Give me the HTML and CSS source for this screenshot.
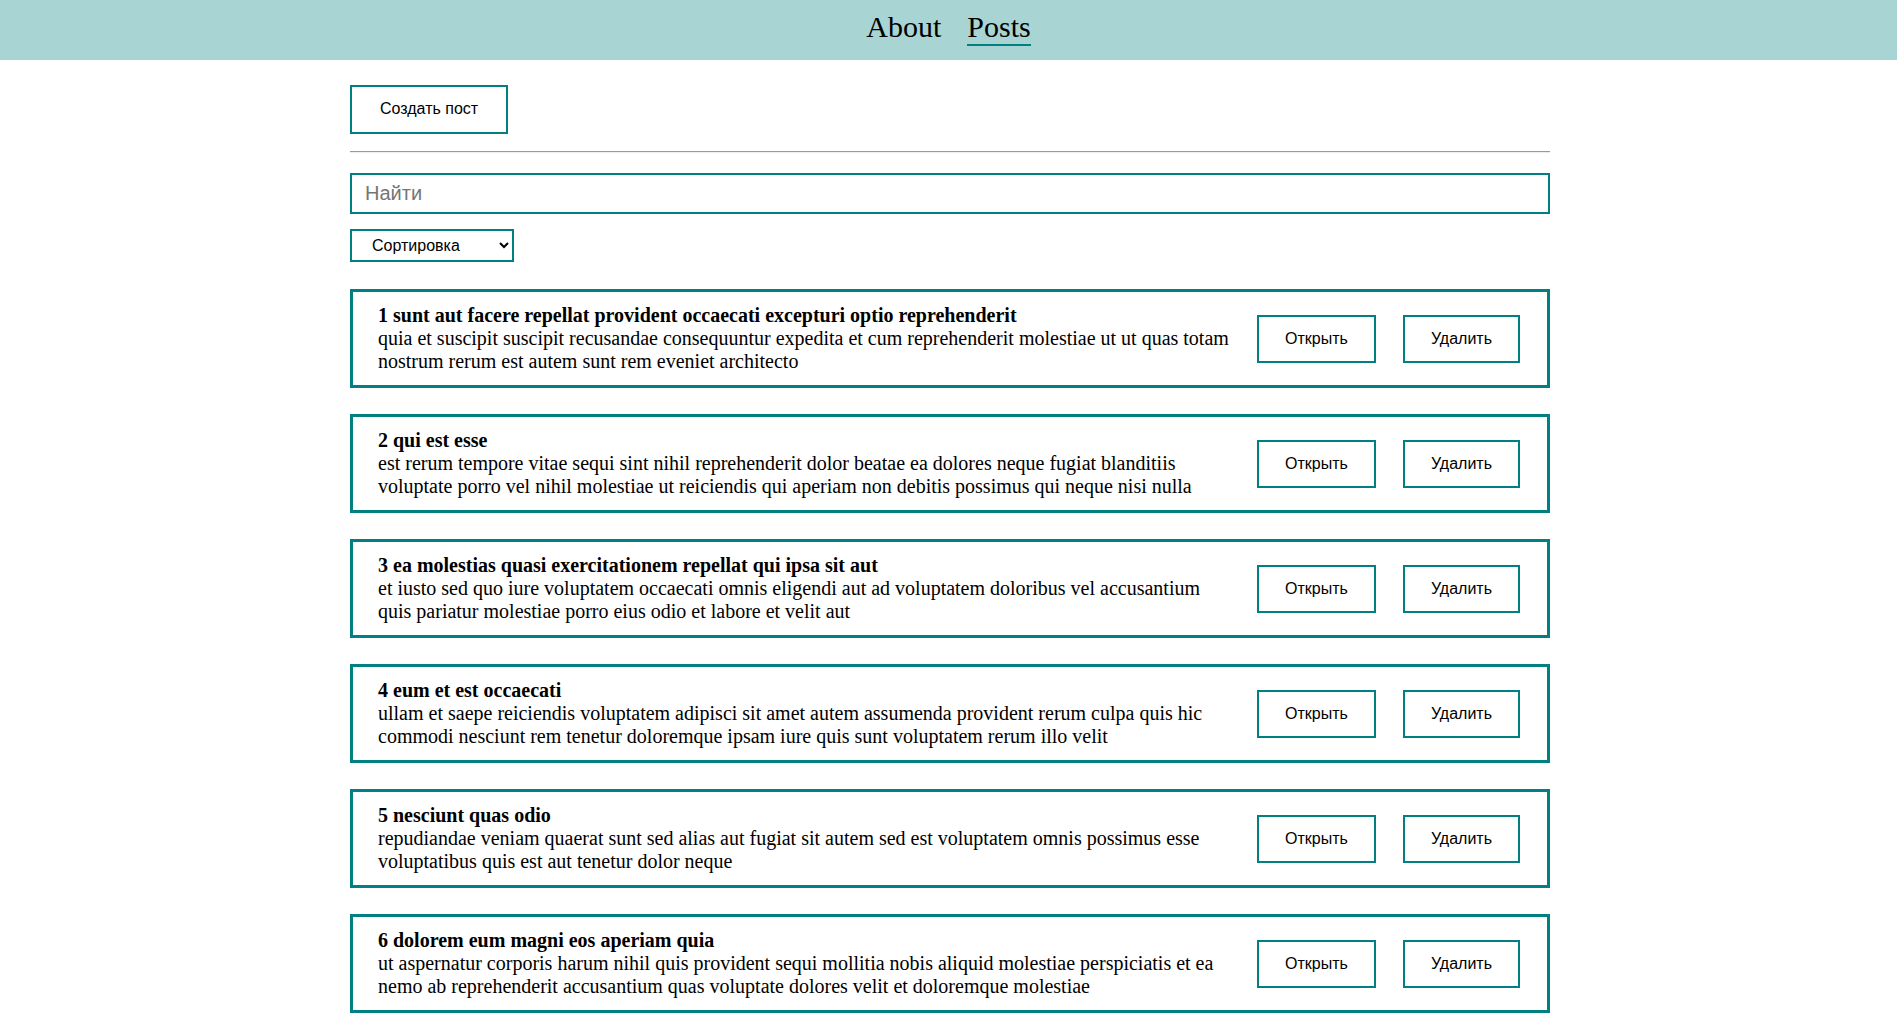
FILE: index.html
```html
<!DOCTYPE html>
<html lang="ru">
<head>
<meta charset="utf-8">
<title>Posts</title>
<link rel="stylesheet" href="styles.css">
</head>
<body>
<header class="navbar">
  <nav class="navbar__links">
    <a class="navbar__link" href="#">About</a>
    <a class="navbar__link navbar__link--active" href="#">Posts</a>
  </nav>
</header>
<main class="app">
  <button class="btn btn--create">Создать пост</button>
  <hr class="divider">
  <input class="search" type="text" placeholder="Найти">
  <div class="sort-row">
    <select class="sort">
      <option>Сортировка</option>
      <option>По названию</option>
      <option>По описанию</option>
    </select>
  </div>
  <div class="post-list">
    <div class="post">
      <div class="post__content">
        <strong class="post__title">1 sunt aut facere repellat provident occaecati excepturi optio reprehenderit</strong>
        <div class="post__body">quia et suscipit suscipit recusandae consequuntur expedita et cum reprehenderit molestiae ut ut quas totam nostrum rerum est autem sunt rem eveniet architecto</div>
      </div>
      <div class="post__btns">
        <button class="btn">Открыть</button>
        <button class="btn">Удалить</button>
      </div>
    </div>
    <div class="post">
      <div class="post__content">
        <strong class="post__title">2 qui est esse</strong>
        <div class="post__body">est rerum tempore vitae sequi sint nihil reprehenderit dolor beatae ea dolores neque fugiat blanditiis voluptate porro vel nihil molestiae ut reiciendis qui aperiam non debitis possimus qui neque nisi nulla</div>
      </div>
      <div class="post__btns">
        <button class="btn">Открыть</button>
        <button class="btn">Удалить</button>
      </div>
    </div>
    <div class="post">
      <div class="post__content">
        <strong class="post__title">3 ea molestias quasi exercitationem repellat qui ipsa sit aut</strong>
        <div class="post__body">et iusto sed quo iure voluptatem occaecati omnis eligendi aut ad voluptatem doloribus vel accusantium quis pariatur molestiae porro eius odio et labore et velit aut</div>
      </div>
      <div class="post__btns">
        <button class="btn">Открыть</button>
        <button class="btn">Удалить</button>
      </div>
    </div>
    <div class="post">
      <div class="post__content">
        <strong class="post__title">4 eum et est occaecati</strong>
        <div class="post__body">ullam et saepe reiciendis voluptatem adipisci sit amet autem assumenda provident rerum culpa quis hic commodi nesciunt rem tenetur doloremque ipsam iure quis sunt voluptatem rerum illo velit</div>
      </div>
      <div class="post__btns">
        <button class="btn">Открыть</button>
        <button class="btn">Удалить</button>
      </div>
    </div>
    <div class="post">
      <div class="post__content">
        <strong class="post__title">5 nesciunt quas odio</strong>
        <div class="post__body">repudiandae veniam quaerat sunt sed alias aut fugiat sit autem sed est voluptatem omnis possimus esse voluptatibus quis est aut tenetur dolor neque</div>
      </div>
      <div class="post__btns">
        <button class="btn">Открыть</button>
        <button class="btn">Удалить</button>
      </div>
    </div>
    <div class="post">
      <div class="post__content">
        <strong class="post__title">6 dolorem eum magni eos aperiam quia</strong>
        <div class="post__body">ut aspernatur corporis harum nihil quis provident sequi mollitia nobis aliquid molestiae perspiciatis et ea nemo ab reprehenderit accusantium quas voluptate dolores velit et doloremque molestiae</div>
      </div>
      <div class="post__btns">
        <button class="btn">Открыть</button>
        <button class="btn">Удалить</button>
      </div>
    </div>
  </div>
</main>
</body>
</html>
```
FILE: styles.css
```css
* {
  box-sizing: border-box;
}

html, body {
  margin: 0;
  padding: 0;
}

body {
  font-family: "Liberation Serif", "Times New Roman", serif;
  color: #000;
  background: #fff;
  overflow: hidden;
}

.navbar {
  height: 60px;
  background: #a8d4d4;
  display: flex;
  justify-content: center;
  align-items: center;
}

.navbar__links {
  display: flex;
  gap: 26px;
  padding-bottom: 5px;
}

.navbar__link {
  font-family: "Liberation Serif", "Times New Roman", serif;
  font-size: 30px;
  color: #000;
  text-decoration: none;
  border-bottom: 2px solid transparent;
}

.navbar__link--active {
  border-bottom-color: #008080;
}

.app {
  width: 1203px;
  margin: 0 auto;
  padding: 25px 0 0 3px;
  display: flex;
  flex-direction: column;
  align-items: flex-start;
}

.btn {
  font-family: "Liberation Sans", Arial, sans-serif;
  font-size: 16px;
  color: #000;
  background: #fff;
  border: 2px solid #008080;
  padding: 13px 26px;
  line-height: normal;
  cursor: pointer;
}

.btn--create {
  padding: 13px 28px 14px;
}

.divider {
  align-self: stretch;
  margin: 17px 0 20px;
  border: none;
  border-top: 1px solid #9a9a9a;
  border-bottom: 1px solid #eeeeee;
  height: 0;
}

.search {
  align-self: stretch;
  height: 41px;
  border: 2px solid #008080;
  padding: 0 13px;
  font-family: "Liberation Sans", Arial, sans-serif;
  font-size: 20px;
  outline: none;
}

.search::placeholder {
  color: #757575;
}

.sort-row {
  margin-top: 15px;
}

.sort {
  width: 164px;
  height: 33px;
  border: 2px solid #008080;
  border-radius: 0;
  background: #fff;
  padding: 0 0 0 16px;
  font-family: "Liberation Sans", Arial, sans-serif;
  font-size: 16px;
  color: #000;
}

.post-list {
  align-self: stretch;
  margin-top: 27px;
  display: flex;
  flex-direction: column;
  gap: 26px;
}

.post {
  display: flex;
  align-items: center;
  gap: 25px;
  border: 3px solid #008080;
  padding: 12px 27px 12px 25px;
  font-size: 20px;
}

.post__content {
  flex: 1;
  min-width: 0;
}

.post__title {
  display: block;
  font-weight: bold;
}

.post__btns {
  display: flex;
  gap: 27px;
}
```
